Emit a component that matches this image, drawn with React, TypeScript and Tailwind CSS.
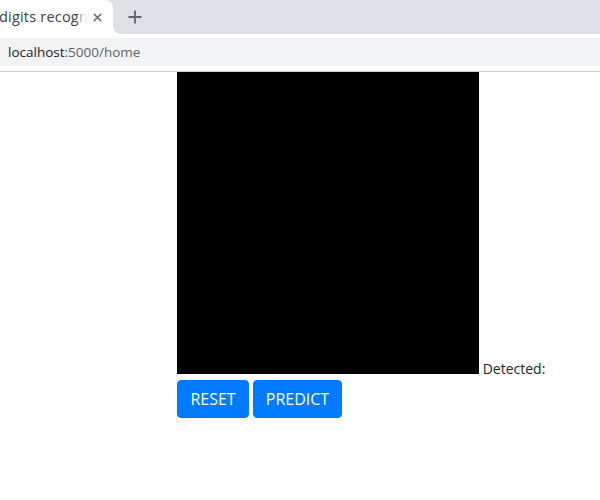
import React from "react";

export default function App() {
  return (
    <div
      className="w-[600px] h-[500px] bg-white overflow-hidden"
      style={{ fontFamily: '"Open Sans", "Noto Sans", sans-serif' }}
    >
      {/* Tab strip */}
      <div className="h-[34px] bg-[#dee1e6] flex">
        <div className="relative w-[113px] h-[34px] bg-white rounded-tr-[8px] flex items-center">
          <div className="relative w-[90px] h-[20px] overflow-hidden">
            <span className="absolute left-[-1px] top-0 whitespace-nowrap text-[14.5px] tracking-[0.2px] leading-[20px] text-[#3c4043]">
              digits recogn
            </span>
            <div className="absolute right-0 top-0 h-full w-[14px] bg-gradient-to-r from-transparent via-[rgba(255,255,255,0.8)] to-white" />
          </div>
          <svg
            className="ml-[3px]"
            width="9"
            height="9"
            viewBox="0 0 10 10"
            fill="none"
            stroke="#6b6f73"
            strokeWidth="1.7"
            strokeLinecap="round"
          >
            <path d="M1.5 1.5 L8.5 8.5 M8.5 1.5 L1.5 8.5" />
          </svg>
          <div className="absolute right-[-8px] bottom-0 w-[8px] h-[8px] bg-white">
            <div className="w-full h-full bg-[#dee1e6] rounded-bl-[8px]" />
          </div>
        </div>
        <div className="ml-[15px] flex items-center">
          <svg width="14" height="14" viewBox="0 0 14 14" fill="none" stroke="#5f6368" strokeWidth="1.8">
            <path d="M7 0.5 V13.5 M0.5 7 H13.5" />
          </svg>
        </div>
      </div>

      {/* Toolbar */}
      <div className="h-[37px] bg-white pt-[4px]">
        <div className="h-[28px] bg-[#f1f3f4] flex items-center pl-[8px]">
          <span className="text-[13.5px] text-[#202124]">localhost</span>
          <span className="text-[13.5px] text-[#5f6368]">:5000/home</span>
        </div>
      </div>
      <div className="h-px bg-[#cfcfcf]" />

      {/* Page */}
      <div className="pl-[177px] text-[14px] leading-[21px] text-[#212529]">
        <div>
          <div className="inline-block w-[302px] h-[302px] bg-black align-baseline" />{" "}
          <span>Detected:</span>
        </div>
        <div className="flex gap-[4px] mt-[1px]">
          <button className="w-[72px] h-[38px] border border-[#007bff] bg-[#007bff] text-white text-[16px] leading-[24px] rounded-[4px]">
            RESET
          </button>
          <button className="w-[89px] h-[38px] border border-[#007bff] bg-[#007bff] text-white text-[16px] leading-[24px] rounded-[4px]">
            PREDICT
          </button>
        </div>
      </div>
    </div>
  );
}
